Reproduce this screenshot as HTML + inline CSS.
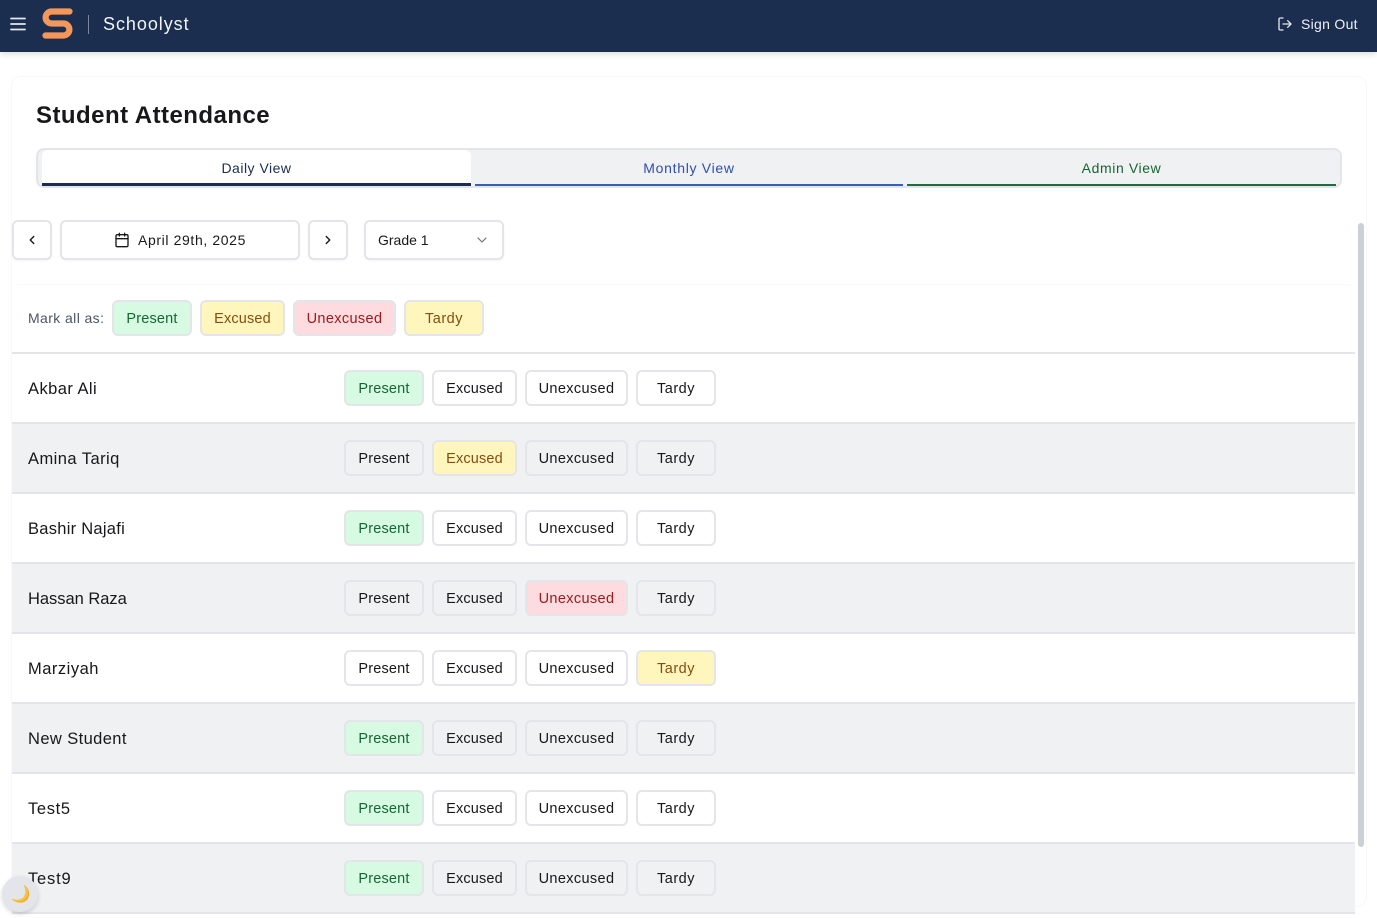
<!DOCTYPE html>
<html lang="en"><head><meta charset="utf-8"><title>Schoolyst</title>
<style>
*{box-sizing:border-box}
html,body{margin:0;padding:0;width:1377px;height:918px;overflow:hidden;background:#fff;font-family:"Liberation Sans",sans-serif;color:#18181b}
.a{position:absolute}
.hdr{left:0;top:0;width:1377px;height:52px;background:#1b2e4f;box-shadow:0 2px 6px rgba(0,0,0,.14);z-index:3}
.card{left:11px;top:76px;width:1356px;height:831px;border:1px solid #f8f8f9;border-radius:10px}
.btn{position:absolute;height:36px;border:2px solid #e4e5ea;border-radius:6px;font-size:14.5px;line-height:34px;text-align:center;color:#18181b;white-space:nowrap}
.b1{left:344px;width:80px;letter-spacing:.18px}.b2{left:432px;width:85px;letter-spacing:.15px}.b3{left:525px;width:103px;letter-spacing:.36px}.b4{left:636px;width:80px;letter-spacing:.5px}
.g{background:#d6fae2;color:#166534}
.y{background:#fef6bd;color:#854d0e}
.r{background:#fddbde;color:#991b1b}
.row{position:absolute;left:12px;width:1343px;height:70px;border-bottom:2px solid #e4e5ea}
.row.e{background:#f0f1f3}
.nm{position:absolute;left:28px;font-size:16.5px;line-height:20px;white-space:nowrap}
.tab{position:absolute;top:150px;height:36px;font-size:14px;text-align:center;line-height:36px}
.ctl{position:absolute;top:220px;height:40px;border:2px solid #e4e5ea;border-radius:6px;background:#fff;box-shadow:0 1px 2px rgba(0,0,0,.05)}
</style></head><body>
<div class="a hdr"></div>
<div class="a card"></div>
<div style="position:absolute;left:0;top:0;z-index:4;width:1377px;height:52px">
<svg class="a" style="left:9px;top:16px" width="18" height="16" viewBox="0 0 18 16" fill="none" stroke="#e5e7eb" stroke-width="1.8" stroke-linecap="round"><path d="M2 2.500H16M2 8H16M2 13.500H16"/></svg>
<svg class="a" style="left:40px;top:6px" width="36" height="36" viewBox="0 0 36 36" fill="none"><path d="M29.500 5.500H11.600a6 6 0 0 0 0 12H23.400a6 6 0 0 1 0 12H5.500" stroke="#f4975a" stroke-width="6.200" stroke-linecap="round"/></svg>
<div class="a" style="left:88px;top:15px;width:1px;height:19px;background:#7c8799"></div>
<div class="a" style="left:103px;top:13px;font-size:18px;letter-spacing:.95px;line-height:22px;color:#f3f4f6">Schoolyst</div>
<svg class="a" style="left:1277px;top:16px" width="16" height="16" viewBox="0 0 24 24" fill="none" stroke="#e5e7eb" stroke-width="2" stroke-linecap="round" stroke-linejoin="round"><path d="M9 21H5a2 2 0 0 1-2-2V5a2 2 0 0 1 2-2h4M16 17l5-5-5-5M21 12H9"/></svg>
<div class="a" style="left:1301px;top:15px;font-size:14px;letter-spacing:.3px;line-height:18px;color:#f0f1f3">Sign Out</div>
</div>
<div class="a" style="left:36px;top:101px;font-size:24px;font-weight:700;letter-spacing:.46px;line-height:30px;color:#18181b">Student Attendance</div>
<div class="a" style="left:36px;top:148px;width:1306px;height:40px;background:#f0f1f3;border:2px solid #e4e5ea;border-radius:8px"></div>
<div class="tab" style="left:42px;width:429px;background:#fff;border-radius:6px 6px 0 0;border-bottom:3px solid #1b2e4f;color:#1b2e4f;letter-spacing:.5px">Daily View</div>
<div class="tab" style="left:475px;width:428px;border-bottom:2px solid #3b5db5;color:#2f4fa8;letter-spacing:.7px">Monthly View</div>
<div class="tab" style="left:907px;width:429px;border-bottom:2px solid #24693f;color:#166534;letter-spacing:.6px">Admin View</div>
<div class="ctl" style="left:12px;width:40px"><svg class="a" style="left:11px;top:11px" width="14" height="14" viewBox="0 0 24 24" fill="none" stroke="#18181b" stroke-width="2.400" stroke-linecap="round" stroke-linejoin="round"><path d="M15 18l-6-6 6-6"/></svg></div>
<div class="ctl" style="left:60px;width:240px"><svg class="a" style="left:52px;top:10px" width="16" height="16" viewBox="0 0 24 24" fill="none" stroke="#18181b" stroke-width="2" stroke-linecap="round" stroke-linejoin="round"><rect x="3" y="4" width="18" height="18" rx="2"/><path d="M16 2v4M8 2v4M3 10h18"/></svg><div class="a" style="left:76px;top:9px;font-size:14px;letter-spacing:.62px;line-height:18px;white-space:nowrap">April 29th, 2025</div></div>
<div class="ctl" style="left:308px;width:40px"><svg class="a" style="left:11px;top:11px" width="14" height="14" viewBox="0 0 24 24" fill="none" stroke="#18181b" stroke-width="2.400" stroke-linecap="round" stroke-linejoin="round"><path d="M9 18l6-6-6-6"/></svg></div>
<div class="ctl" style="left:364px;width:140px"><div class="a" style="left:12px;top:9px;font-size:14px;letter-spacing:0;line-height:18px;white-space:nowrap">Grade 1</div><svg class="a" style="left:108px;top:10px" width="16" height="16" viewBox="0 0 24 24" fill="none" stroke="#71717a" stroke-width="1.800" stroke-linecap="round" stroke-linejoin="round"><path d="M6 9l6 6 6-6"/></svg></div>
<div class="a" style="left:12px;top:284px;width:1343px;height:70px;border-top:1px solid #f9f9fa;border-bottom:2px solid #e4e5ea;border-radius:8px 8px 0 0"></div>
<div class="a" style="left:28px;top:309px;font-size:14px;letter-spacing:.4px;line-height:18px;color:#4b5563">Mark all as:</div>
<div class="btn b1 g" style="top:300px;left:112px">Present</div>
<div class="btn b2 y" style="top:300px;left:200px">Excused</div>
<div class="btn b3 r" style="top:300px;left:293px">Unexcused</div>
<div class="btn b4 y" style="top:300px;left:404px">Tardy</div>

<div class="row" style="top:354px"></div><div class="nm" style="top:379px;letter-spacing:.45px">Akbar Ali</div>
<div class="btn b1 g" style="top:370px">Present</div><div class="btn b2" style="top:370px">Excused</div><div class="btn b3" style="top:370px">Unexcused</div><div class="btn b4" style="top:370px">Tardy</div>

<div class="row e" style="top:424px"></div><div class="nm" style="top:449px;letter-spacing:.45px">Amina Tariq</div>
<div class="btn b1" style="top:440px">Present</div><div class="btn b2 y" style="top:440px">Excused</div><div class="btn b3" style="top:440px">Unexcused</div><div class="btn b4" style="top:440px">Tardy</div>

<div class="row" style="top:494px"></div><div class="nm" style="top:519px;letter-spacing:.27px">Bashir Najafi</div>
<div class="btn b1 g" style="top:510px">Present</div><div class="btn b2" style="top:510px">Excused</div><div class="btn b3" style="top:510px">Unexcused</div><div class="btn b4" style="top:510px">Tardy</div>

<div class="row e" style="top:564px"></div><div class="nm" style="top:589px;letter-spacing:-.03px">Hassan Raza</div>
<div class="btn b1" style="top:580px">Present</div><div class="btn b2" style="top:580px">Excused</div><div class="btn b3 r" style="top:580px">Unexcused</div><div class="btn b4" style="top:580px">Tardy</div>

<div class="row" style="top:634px"></div><div class="nm" style="top:659px;letter-spacing:.5px">Marziyah</div>
<div class="btn b1" style="top:650px">Present</div><div class="btn b2" style="top:650px">Excused</div><div class="btn b3" style="top:650px">Unexcused</div><div class="btn b4 y" style="top:650px">Tardy</div>

<div class="row e" style="top:704px"></div><div class="nm" style="top:729px;letter-spacing:.4px">New Student</div>
<div class="btn b1 g" style="top:720px">Present</div><div class="btn b2" style="top:720px">Excused</div><div class="btn b3" style="top:720px">Unexcused</div><div class="btn b4" style="top:720px">Tardy</div>

<div class="row" style="top:774px"></div><div class="nm" style="top:799px;letter-spacing:.65px">Test5</div>
<div class="btn b1 g" style="top:790px">Present</div><div class="btn b2" style="top:790px">Excused</div><div class="btn b3" style="top:790px">Unexcused</div><div class="btn b4" style="top:790px">Tardy</div>

<div class="row e" style="top:844px"></div><div class="nm" style="top:869px;letter-spacing:.8px">Test9</div>
<div class="btn b1 g" style="top:860px">Present</div><div class="btn b2" style="top:860px">Excused</div><div class="btn b3" style="top:860px">Unexcused</div><div class="btn b4" style="top:860px">Tardy</div>

<div class="a" style="left:1358px;top:223px;width:6px;height:624px;background:#cbd0d8;border-radius:3px"></div>
<div class="a" style="left:2px;top:876px;width:36px;height:36px;border-radius:50%;background:#e4e5ea;box-shadow:0 2px 5px rgba(0,0,0,.16)"></div>
<svg class="a" style="left:9px;top:883px" width="22" height="22" viewBox="0 0 22 22"><path d="M15 1.500C21 6 21.500 13 18 17c-3.500 3.800-10 4-15-.5-.6-.6-.2-1 .5-.8 4 1.800 8.500 1.300 11-1.500 2.300-2.800 2.500-7.500.3-12-.2-.6-.3-1 .2-.7z" fill="#f5c242"/><path d="M16.500 3C20 7.500 20 12.800 17 16c-3 3-7.500 3.700-12 1.300 4.500 2.900 10 2 13-1.300 3-3.500 2-9-1.500-13z" fill="#e39a1f"/></svg>
</body></html>
